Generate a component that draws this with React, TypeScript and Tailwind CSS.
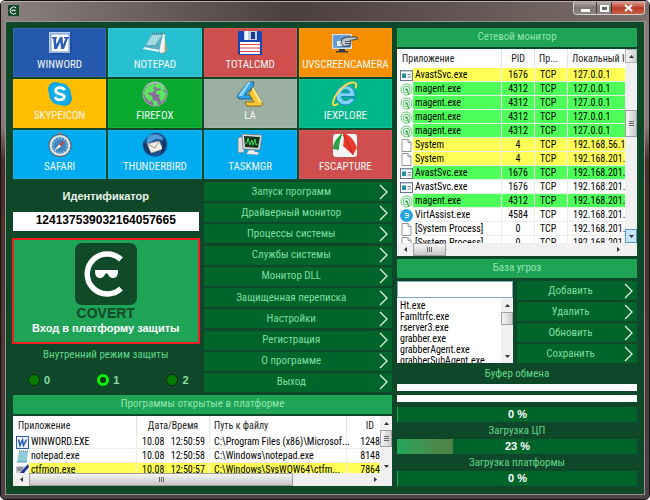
import type { ReactNode } from "react";

const NARROW = "font-['Roboto_Condensed',Roboto,'Liberation_Sans',sans-serif]";
const WIDE = "font-['Liberation_Sans',Arial,sans-serif]";

function WordIcon() {
  return (
    <svg viewBox="0 0 26 26" className="size-[26px]">
      <rect x="2" y="2" width="23" height="23" rx="1" fill="#1f4fa3" />
      <rect x="2" y="2" width="21" height="21" fill="#b9cdf0" />
      <rect x="4" y="4" width="18" height="18" fill="#fff" />
      <rect x="4" y="4" width="18" height="18" fill="none" stroke="#5b7fc4" strokeWidth="0.8" />
      <path d="M5 7h5v1.500H8.900l.6 6L13 7h2.500l.6 7.500L18.500 8.500H17V7h5v1.500h-1.200L17 19h-3l-.7-7-3.300 7H7.200L6.300 8.500H5z" fill="#2d5cb5" />
    </svg>
  );
}

function NotepadIcon() {
  return (
    <svg viewBox="0 0 26 26" className="size-[26px]">
      <path d="M22 4l3 16-4 4-4-2z" fill="#b99b63" />
      <path d="M11 4h12l-.500 18-4 1z" fill="#eef6f7" />
      <path d="M9 4h12l-4 18L1 19z" fill="#58adbf" />
      <path d="M10 5h10l-7 10H4z" fill="#b4e5eb" opacity=".8" />
      <path d="M1 19l16 3 .5-2L2 17z" fill="#e4f6f7" />
      <path d="M10 3.500h13" stroke="#607f86" strokeWidth="2" strokeDasharray="1 1" />
    </svg>
  );
}

function FloppyIcon() {
  return (
    <svg viewBox="0 0 26 26" className="size-[26px]">
      <path d="M1 2l1-1h22l1 1v23H2l-1-2z" fill="#1747b4" />
      <path d="M7 1h13v9H7z" fill="#c5cddd" />
      <path d="M14 2h4v7h-4z" fill="#173a91" />
      <path d="M8 1h3v9H8z" fill="#f3f5fa" />
      <path d="M3 12h20v12H3z" fill="#fff" />
      <path d="M3 14.500h20M3 18h20M3 21.500h20" stroke="#e2454c" strokeWidth="1.200" />
      <path d="M2 22h1v2H2zM23 22h1v2h-1z" fill="#0d2a70" />
    </svg>
  );
}

function CameraIcon() {
  return (
    <svg viewBox="0 0 26 26" className="size-[26px]">
      <path d="M0 4h20v15H0z" fill="#d5dde6" />
      <path d="M1.500 5.500h17v12h-17z" fill="#3c78bb" />
      <path d="M1.500 5.500h17L8 17.500H1.500z" fill="#5f9ad6" />
      <path d="M7 19h6v2h3v1.500H4V21h3z" fill="#333b45" />
      <path d="M5 11h5v5H5z" fill="#e8edf2" />
      <path d="M10 9l5-2h10l1 2-8 1.500 1 2-1 3-6 1-3-3z" fill="#bcc4cb" stroke="#30363d" strokeWidth=".9" />
      <path d="M13 11.500h5M13 13.500h5" stroke="#30363d" strokeWidth=".8" />
    </svg>
  );
}

function SkypeIcon() {
  return (
    <svg viewBox="0 0 26 26" className="size-[26px]">
      <circle cx="8.500" cy="8.500" r="7.500" fill="#0ba4e0" />
      <circle cx="17.500" cy="17.500" r="7.500" fill="#0ba4e0" />
      <circle cx="13" cy="13" r="11" fill="#12aeea" />
      <path d="M17.500 9.300C16.800 7.400 15 6.700 13 6.700c-2.500 0-4.300 1.200-4.300 3.100 0 4.500 8.500 2 8.500 5.800 0 2-1.900 3.200-4.300 3.200-2.500 0-4.200-1-4.800-3" fill="none" stroke="#fff" strokeWidth="2.800" />
    </svg>
  );
}

function FirefoxIcon() {
  return (
    <svg viewBox="0 0 26 26" className="size-[26px]">
      <circle cx="13" cy="13" r="12.500" fill="#a3b0aa" />
      <circle cx="13" cy="13" r="11.500" fill="#8a6f9d" />
      <path d="M3 8l4-4 5-2 1 3-2 2 2 2-3 3-3-1-1 2 4 2 1 3-3 3-4-4-2-5zM14 2l6 2 4 5-4 1-2-3-3 1-2-3zM14 10l5-1 5 3-1 5-4 4-2-5 1-2-4-1zM10 19l5 1 1 4-4 1z" fill="#5be660" />
      <path d="M4 6a11.500 11.500 0 0118 0" fill="none" stroke="#e2e9e4" strokeWidth=".8" opacity=".7" />
    </svg>
  );
}

function LaIcon() {
  return (
    <svg viewBox="0 0 26 26" className="size-[26px]">
      <path d="M11 1h6l-1 5-8 8h5l2 4H2L0 15z" fill="#2ea3e6" stroke="#12507f" strokeWidth=".8" />
      <path d="M11 1h3L5 15H1z" fill="#8ed6f8" />
      <path d="M16 6l10 17-2 2H10l-2-4h9l-5-8z" fill="#f9c632" stroke="#7b5a12" strokeWidth=".8" />
      <path d="M15 8l7 13h3L16 6z" fill="#fde98c" />
    </svg>
  );
}

function ExplorerIcon() {
  return (
    <svg viewBox="0 0 26 26" className="size-[26px]">
      <path d="M23 15.500H9.500c.4 2.700 2 4 4.200 4 1.800 0 3-.7 3.700-2.200h5.200c-1.200 4-4.700 6.700-9.100 6.700-5.500 0-9.500-4-9.500-9.500S8 4.600 13.500 4.600c5.800 0 10 4.400 9.500 10.900zM9.500 11.800h8c-.3-2.100-1.800-3.200-3.900-3.200s-3.600 1.100-4.100 3.200z" fill="#7dd2f8" stroke="#1c7fc0" strokeWidth=".9" />
      <path d="M6 22.500c-3 2.500-5.500 2.300-5-1C2 14 12 2.500 20 1.500c4-.5 5 2 3.500 6" fill="none" stroke="#f8d749" strokeWidth="2" />
    </svg>
  );
}

function SafariIcon() {
  return (
    <svg viewBox="0 0 26 26" className="size-[26px]">
      <rect x="11" y="0" width="4" height="3" rx="1" fill="#7c8790" />
      <circle cx="13" cy="13.500" r="11.500" fill="#59636b" />
      <circle cx="13" cy="13.500" r="10.500" fill="#dde2e5" />
      <circle cx="13" cy="13.500" r="8.200" fill="#3d84bd" />
      <circle cx="13" cy="13.500" r="6.800" fill="none" stroke="#b9dcf2" strokeWidth="1.500" strokeDasharray="1 2" />
      <path d="M19 8l-5 6.500-2-2z" fill="#e0432f" />
      <path d="M7 19l5-6.500 2 2z" fill="#f4f7f9" />
    </svg>
  );
}

function ThunderbirdIcon() {
  return (
    <svg viewBox="0 0 26 26" className="size-[26px]">
      <path d="M9 2c6-3 13 0 15.500 6 2.500 7-1 14-7.500 16C9 26 2 22 1 15 0 9 4 6 9 2z" fill="#1d4f8f" />
      <path d="M8 3c6-2 12 0 14 5l-8-1-9 5C4 8 5 5 8 3z" fill="#4d9bd6" />
      <path d="M5 12l12-3 4 8-12 4z" fill="#f2efe9" stroke="#a39d90" strokeWidth=".6" />
      <path d="M5 12l8 4 4-7" fill="none" stroke="#958c7a" strokeWidth=".9" />
      <path d="M1 10l4 2 4 10c-5-1-8-6-8-12z" fill="#173b6e" />
      <path d="M21 6c4 5 3 13-3 17 2-5 3-11 3-17z" fill="#123163" />
    </svg>
  );
}

function TaskManagerIcon() {
  return (
    <svg viewBox="0 0 26 26" className="size-[26px]">
      <path d="M1 6l6-2v16l-5 1-1-2z" fill="#dcdfe0" stroke="#777e80" strokeWidth=".7" />
      <path d="M5 2l20 1-2 15-17-1z" fill="#d6dadb" stroke="#6c7376" strokeWidth=".7" />
      <path d="M7 4l16 1-2 11-13-1z" fill="#15351e" />
      <path d="M8 12l2-1 1-5 2 7 2-5 1 5 2-6 1 6 2-1" fill="none" stroke="#3fd655" strokeWidth="1" />
      <path d="M12 18h5l1 2h4l-1 3-12-1z" fill="#eceeee" stroke="#868c8e" strokeWidth=".5" />
    </svg>
  );
}

function CaptureIcon() {
  return (
    <svg viewBox="0 0 26 26" className="size-[26px]">
      <rect x="1" y="2" width="24" height="23" rx="3" fill="#f3f4f3" />
      <path d="M11 1C5 5 1 11 1 17l6 1c0-6 1-11 4-17z" fill="#27a343" />
      <path d="M11 1c8 2 12 9 14 15l-4 7-10-9c1-5 1-9 0-13z" fill="#e83a2c" />
      <path d="M11 3c4 5 7 12 10 20" fill="none" stroke="#a81f18" strokeWidth=".8" />
    </svg>
  );
}

function CovertMark({ className }: { className: string }) {
  return (
    <svg viewBox="0 0 62 62" className={className} aria-hidden="true">
      <rect width="62" height="62" rx="7" fill="#104a29" />
      <path d="M46 16.500A20 20 0 1 0 46 45.500" fill="none" stroke="#fff" strokeWidth="5.500" />
      <path d="M20 27h23v1c0 5-2 7-5 7-3.300 0-4.600-2.500-5.400-4.500h-2.200C29.600 32.500 28.300 35 25 35c-3 0-5-2-5-7z" fill="#fff" />
    </svg>
  );
}

const tiles: { name: string; color: string; icon: ReactNode }[] = [
  { name: "WINWORD", color: "bg-[#2459ad]", icon: <WordIcon /> },
  { name: "NOTEPAD", color: "bg-[#27bfd2]", icon: <NotepadIcon /> },
  { name: "TOTALCMD", color: "bg-[#cf4e4e]", icon: <FloppyIcon /> },
  { name: "UVSCREENCAMERA", color: "bg-[#f68f00]", icon: <CameraIcon /> },
  { name: "SKYPEICON", color: "bg-[#ffbd00]", icon: <SkypeIcon /> },
  { name: "FIREFOX", color: "bg-[#09a82e]", icon: <FirefoxIcon /> },
  { name: "LA", color: "bg-[#9bb0a2]", icon: <LaIcon /> },
  { name: "IEXPLORE", color: "bg-[#00b78a]", icon: <ExplorerIcon /> },
  { name: "SAFARI", color: "bg-[#00acef]", icon: <SafariIcon /> },
  { name: "THUNDERBIRD", color: "bg-[#00acef]", icon: <ThunderbirdIcon /> },
  { name: "TASKMGR", color: "bg-[#00acef]", icon: <TaskManagerIcon /> },
  { name: "FSCAPTURE", color: "bg-[#cf4e4e]", icon: <CaptureIcon /> },
];

const menu = [
  "Запуск программ",
  "Драйверный монитор",
  "Процессы системы",
  "Службы системы",
  "Монитор DLL",
  "Защищенная переписка",
  "Настройки",
  "Регистрация",
  "О программе",
  "Выход",
];

type RowIcon = "app" | "agent" | "file" | "assist" | "word" | "note" | "pen";
type Tone = "yellow" | "green" | "plain";

const toneClass: Record<Tone, string> = {
  yellow: "bg-[#ffff55]",
  green: "bg-[#4dff58]",
  plain: "bg-white",
};

const connections: [RowIcon, string, string, string, Tone][] = [
  ["app", "AvastSvc.exe", "1676", "127.0.0.1", "yellow"],
  ["agent", "magent.exe", "4312", "127.0.0.1", "green"],
  ["agent", "magent.exe", "4312", "127.0.0.1", "green"],
  ["agent", "magent.exe", "4312", "127.0.0.1", "green"],
  ["agent", "magent.exe", "4312", "127.0.0.1", "green"],
  ["file", "System", "4", "192.168.56.1", "yellow"],
  ["file", "System", "4", "192.168.201.", "yellow"],
  ["app", "AvastSvc.exe", "1676", "192.168.201.", "green"],
  ["app", "AvastSvc.exe", "1676", "192.168.201.", "plain"],
  ["agent", "magent.exe", "4312", "192.168.201.", "green"],
  ["assist", "VirtAssist.exe", "4584", "192.168.201.", "plain"],
  ["file", "[System Process]", "0", "192.168.201.", "plain"],
  ["file", "[System Process]", "0", "192.168.201.", "plain"],
];

const programs: [RowIcon, string, string, string, string, Tone][] = [
  ["word", "WINWORD.EXE", "12:50:59", "C:\\Program Files (x86)\\Microsof...", "1248", "plain"],
  ["note", "notepad.exe", "12:50:58", "C:\\Windows\\notepad.exe", "8148", "plain"],
  ["pen", "ctfmon.exe", "12:50:57", "C:\\Windows\\SysWOW64\\ctfm...", "7864", "yellow"],
];

const threats = ["Ht.exe", "Famltrfc.exe", "rserver3.exe", "grabber.exe", "grabberAgent.exe", "grabberSubAgent.exe"];

function SmallIcon({ kind }: { kind: RowIcon }) {
  return (
    <svg viewBox="0 0 13 13" className="mx-auto block size-[13px]" aria-hidden="true">
      {kind === "app" && (
        <>
          <rect x=".5" y="1.500" width="12" height="10" fill="#f1f6f8" stroke="#6c7885" />
          <path d="M1 2h11" stroke="#8ea6bd" />
          <path d="M2 4.500h4v4.500H2z" fill="#2b8f9b" />
          <path d="M7.500 5.500h3.500M7.500 8h3.500" stroke="#7d8a95" />
        </>
      )}
      {kind === "agent" && (
        <>
          <circle cx="6.500" cy="6.500" r="5.500" fill="#fff" stroke="#3fbf55" strokeWidth=".9" />
          <circle cx="6.500" cy="6.500" r="3.300" fill="none" stroke="#3fbf55" strokeWidth=".9" />
          <circle cx="6.500" cy="6.500" r="1.300" fill="#2fae49" />
          <path d="M7 7l2 5" stroke="#2fae49" />
        </>
      )}
      {kind === "file" && <path d="M2 .5h6l3 3v9H2zM8 .5v3h3" fill="#fff" stroke="#8a8a8a" strokeWidth=".9" />}
      {kind === "assist" && (
        <>
          <circle cx="6.500" cy="6.500" r="6.500" fill="#2aa5e0" />
          <path d="M5 4.500h2.500a1 1 0 011 1v2a1 1 0 01-1 1H5M5.500 6.500h3" fill="none" stroke="#fff" />
        </>
      )}
      {kind === "word" && (
        <>
          <rect x=".5" y=".5" width="12" height="12" fill="#eaf1fc" stroke="#2a57b0" />
          <path d="M2.500 3.500l1.500 6 2.500-5.500 1 5.500 3-6" fill="none" stroke="#2a57b0" strokeWidth="1.500" />
        </>
      )}
      {kind === "note" && (
        <>
          <path d="M3 1h9l-1 11H1z" fill="#8fcbd6" />
          <path d="M3 1h9" stroke="#5c7f88" strokeDasharray="1 1" />
          <path d="M1 12h10" stroke="#4f9aa8" />
        </>
      )}
      {kind === "pen" && (
        <>
          <path d="M0 2h9v10H0z" fill="#c9ccd2" />
          <path d="M1 4h6M1 6h5" stroke="#555b66" />
          <path d="M12 0L4 9l-1 3 4-2 6-7z" fill="#1a2f9c" />
        </>
      )}
    </svg>
  );
}

function Arrow({ dir }: { dir: "up" | "down" | "left" | "right" }) {
  const d = { up: "M1 5l2.500-3L6 5z", down: "M1 2l2.500 3L6 2z", left: "M5 1L2 3.500 5 6z", right: "M2 1l3 2.500L2 6z" }[dir];
  return (
    <svg viewBox="0 0 7 7" className="size-[7px]" aria-hidden="true">
      <path d={d} fill="#333" />
    </svg>
  );
}

function Chevron() {
  return (
    <svg viewBox="0 0 9 16" className="h-4 w-[9px] shrink-0" aria-hidden="true">
      <path d="M1 1l7 7-7 7" fill="none" stroke="#e2f3e6" strokeWidth="1.300" />
    </svg>
  );
}

function ActionButton({ label }: { label: string }) {
  return (
    <button type="button" className="flex h-[19px] w-full items-center bg-[#00652b] pr-1 text-[11px] leading-[14px] text-[#7fdf9f]">
      <span className="flex-1 text-center">{label}</span>
      <Chevron />
    </button>
  );
}

function PanelTitle({ children }: { children: ReactNode }) {
  return <h2 className="flex h-[19px] items-center justify-center bg-[#1fa357] text-[11px] text-[#8fe6ab]">{children}</h2>;
}

function ScrollX({ thumb, end }: { thumb: string; end: string }) {
  return (
    <div className="flex h-[13px] shrink-0 items-center bg-[#f0f0f0]">
      <button type="button" aria-label="Влево" className="flex h-full w-4 items-center justify-center">
        <Arrow dir="left" />
      </button>
      <div className="flex h-full flex-1">
        <div className={`flex h-full items-center justify-center gap-px border border-[#a0a0a0] bg-linear-to-b from-[#f6f6f6] to-[#c6c6c6] ${thumb}`}>
          <i className="h-[5px] w-px bg-[#666]" />
          <i className="h-[5px] w-px bg-[#666]" />
          <i className="h-[5px] w-px bg-[#666]" />
        </div>
      </div>
      <button type="button" aria-label="Вправо" className={`flex h-full items-center pl-1 ${end}`}>
        <Arrow dir="right" />
      </button>
    </div>
  );
}

function ScrollY({ thumb, grip = true, framed = false }: { thumb: string; grip?: boolean; framed?: boolean }) {
  const edge = framed ? "border border-[#b4b4b4] bg-linear-to-r from-[#f4f4f4] to-[#d2d2d2]" : "";
  const lower = framed ? "border border-[#5a9cc4] bg-[#c5e6f6]" : "";
  return (
    <div className="flex w-3 shrink-0 flex-col bg-[#f0f0f0]">
      <button type="button" aria-label="Вверх" className={`flex h-[14px] items-center justify-center ${edge}`}>
        <Arrow dir="up" />
      </button>
      <div className="flex-1">
        <div className={`flex flex-col items-center justify-center gap-px border border-[#a0a0a0] bg-linear-to-r from-[#f6f6f6] to-[#cccccc] ${thumb}`}>
          {grip && (
            <>
              <i className="h-px w-[5px] bg-[#666]" />
              <i className="h-px w-[5px] bg-[#666]" />
              <i className="h-px w-[5px] bg-[#666]" />
            </>
          )}
        </div>
      </div>
      <button type="button" aria-label="Вниз" className={`flex h-[14px] items-center justify-center ${lower}`}>
        <Arrow dir="down" />
      </button>
    </div>
  );
}

function Meter({ value, label }: { value: number; label: string }) {
  return (
    <div
      role="progressbar"
      aria-label={label}
      aria-valuenow={value}
      className="relative flex h-[15px] items-center justify-center border-l border-[#1fa357] bg-[#00652b]"
    >
      <div className="absolute inset-y-0 left-0 bg-linear-to-r from-[#1fa65a] to-[#517f45]" style={{ width: `${value}%` }} />
      <span className={`relative text-[11px] font-bold text-white ${WIDE}`}>{value} %</span>
    </div>
  );
}

const headCell = "overflow-hidden border-r border-[#dfe3e8] p-0 font-normal whitespace-nowrap text-[#222]";
const bodyCell = "border-r border-b border-[#e9efe6] p-0 whitespace-nowrap";

export default function App() {
  return (
    <div
      className={`flex min-h-screen w-full flex-col rounded-[5px] border border-[#15100f] bg-linear-to-b from-[#877c79] from-25% via-[#4a2f24] via-32% to-[#4d4244] px-1 pb-1 text-[11px] ${NARROW}`}
    >
      <header className="-mx-1 flex h-[20px] justify-between rounded-t-[4px] border-t border-[#b9b0ae] bg-linear-to-r from-[#8b8280] via-[#4c3f3f] via-45% to-[#7d706b] pr-1 pl-[7px]">
        <CovertMark className="mt-[3px] size-[11px]" />
        <div className="flex h-[13px] overflow-hidden rounded-b-[4px] border border-t-0 border-[#d3cdcb]">
          <button type="button" aria-label="Свернуть" className="flex w-[23px] items-center justify-center border-r border-[#443b3b] bg-linear-to-b from-[#b3adac] via-[#7d7473] to-[#8f8887]">
            <i className="mt-1 h-[3px] w-[9px] bg-white" />
          </button>
          <button type="button" aria-label="Развернуть" className="flex w-[15px] items-center justify-center border-r border-[#443b3b] bg-linear-to-b from-[#b3adac] via-[#7d7473] to-[#8f8887]">
            <i className="h-[7px] w-[9px] border-2 border-white bg-[#666]" />
          </button>
          <button type="button" aria-label="Закрыть" className="flex w-[32px] items-center justify-center bg-linear-to-b from-[#df988a] via-[#b93b26] to-[#c9604b]">
            <svg viewBox="0 0 9 8" className="h-2 w-[9px]" aria-hidden="true">
              <path d="M1 1l7 6M8 1L1 7" stroke="#fff" strokeWidth="2.200" />
            </svg>
          </button>
        </div>
      </header>

      <main className="grid flex-1 grid-cols-[minmax(0,379fr)_minmax(0,240fr)] items-start gap-x-[5px] border border-[#9b9391] bg-[#0f4828] px-[7px] pt-[6px] pb-2">
        <div className="flex flex-col gap-[3px]">
          <div className="grid grid-cols-4 gap-[2px]">
            {tiles.map((t) => (
              <button key={t.name} type="button" className={`flex h-[49px] flex-col items-center pt-[2px] text-[#f3f7f5] shadow-[inset_0_0_0_1px_rgba(255,255,255,0.08)] ${t.color}`}>
                {t.icon}
                <span className="mt-[2px] text-[11px] leading-[14px]">{t.name}</span>
              </button>
            ))}
          </div>

          <div className="grid grid-cols-2 gap-x-[2px]">
            <section className="flex flex-col pr-[3px]">
              <label htmlFor="ident" className={`pt-[7px] text-center text-[11px] leading-[14px] font-bold text-[#eaf5ee] ${WIDE}`}>
                Идентификатор
              </label>
              <input
                id="ident"
                readOnly
                value="124137539032164057665"
                className={`mt-[9px] h-[19px] bg-white pb-1 text-center text-[12px] font-bold text-black ${WIDE}`}
              />
              <button type="button" className="-mx-px mt-[7px] flex h-[106px] flex-col items-center border-2 border-[#ed1c24] bg-[#1fa357] pt-[3px]">
                <CovertMark className="size-[62px]" />
                <span className={`text-[14px] leading-4 font-bold text-[#104a29] ${WIDE}`}>COVERT</span>
                <span className={`text-[11px] leading-[14px] font-bold text-white ${WIDE}`}>Вход в платформу защиты</span>
              </button>
              <fieldset>
                <legend className="w-full pt-1 text-center leading-[14px] text-[#5fd78a]">Внутренний режим защиты</legend>
                <div className="mt-[11px] flex justify-between pr-[10px] pl-[15px]">
                  {["0", "1", "2"].map((v) => (
                    <label key={v} className={`flex h-[14px] items-center gap-1 text-[11px] font-bold text-[#86dca4] ${WIDE}`}>
                      <input
                        type="radio"
                        name="mode"
                        value={v}
                        defaultChecked={v === "1"}
                        className="size-3 appearance-none rounded-full border border-[#042d10] bg-[#027d02] checked:border-[3px] checked:border-[#0ef00e] checked:bg-[#0a3a14]"
                      />
                      {v}
                    </label>
                  ))}
                </div>
              </fieldset>
            </section>
            <nav className="flex min-h-[210px] flex-col justify-between">
              {menu.map((m) => (
                <ActionButton key={m} label={m} />
              ))}
            </nav>
          </div>

          <section>
            <PanelTitle>Программы открытые в платформе</PanelTitle>
            <div className="mt-[2px] bg-white">
              <div className="flex h-[57px]">
                <div className="min-w-0 flex-1 overflow-hidden">
                  <table className="w-full table-fixed border-separate border-spacing-0 text-[10px] leading-[13px] text-black">
                    <colgroup>
                      <col className="w-[16px]" />
                      <col />
                      <col className="w-[29px]" />
                      <col className="w-[44px]" />
                      <col className="w-[137px]" />
                      <col className="w-[33px]" />
                    </colgroup>
                    <thead>
                      <tr className="h-[19px]">
                        <th colSpan={2} className={`${headCell} pl-[5px] text-left`}>Приложение</th>
                        <th colSpan={2} className={`${headCell} text-center`}>Дата/Время</th>
                        <th className={`${headCell} pl-1 text-left`}>Путь к файлу</th>
                        <th className={`${headCell} border-r-0 pr-[6px] text-right`}>ID</th>
                      </tr>
                    </thead>
                    <tbody>
                      {programs.map(([icon, name, time, path, id, tone]) => (
                        <tr key={id} className={`h-[14px] ${toneClass[tone]}`}>
                          <td className="bg-white p-0 pl-[3px]"><SmallIcon kind={icon} /></td>
                          <td className={`${bodyCell} pl-[2px]`}>{name}</td>
                          <td className={`${bodyCell} border-r-0 pl-[5px]`}>10.08</td>
                          <td className={`${bodyCell} pr-1 text-right`}>{time}</td>
                          <td className={`${bodyCell} pl-1`}>{path}</td>
                          <td className={`${bodyCell} border-r-0 text-right`}>{id}</td>
                        </tr>
                      ))}
                    </tbody>
                  </table>
                </div>
                <ScrollY thumb="h-[17px]" />
              </div>
              <ScrollX thumb="w-[78%]" end="w-[24px]" />
            </div>
          </section>
        </div>

        <div className="flex flex-col">
          <PanelTitle>Сетевой монитор</PanelTitle>
          <div className="mt-[2px] bg-white">
            <div className="flex h-[194px]">
              <div className="min-w-0 flex-1 overflow-hidden">
                <table className="w-full table-fixed border-separate border-spacing-0 text-[10px] leading-[13px] text-black">
                  <colgroup>
                    <col className="w-[16px]" />
                    <col />
                    <col className="w-[33px]" />
                    <col className="w-[33px]" />
                    <col className="w-[57px]" />
                  </colgroup>
                  <thead>
                    <tr className="h-[19px]">
                      <th colSpan={2} className={`${headCell} pl-[5px] text-left`}>Приложение</th>
                      <th className={`${headCell} text-center`}>PID</th>
                      <th className={`${headCell} pl-1 text-left`}>Пр...</th>
                      <th className={`${headCell} border-r-0 pl-1 text-left`}>Локальный IP</th>
                    </tr>
                  </thead>
                  <tbody>
                    {connections.map(([icon, name, pid, ip, tone], i) => (
                      <tr key={i} className={`h-[14px] ${toneClass[tone]}`}>
                        <td className="bg-white p-0 pl-[3px]"><SmallIcon kind={icon} /></td>
                        <td className={`${bodyCell} pl-[2px]`}>{name}</td>
                        <td className={`${bodyCell} text-center`}>{pid}</td>
                        <td className={`${bodyCell} pl-[5px]`}>TCP</td>
                        <td className={`${bodyCell} border-r-0 pl-[5px]`}>{ip}</td>
                      </tr>
                    ))}
                  </tbody>
                </table>
              </div>
              <ScrollY thumb="mt-[47px] h-[27px]" framed />
            </div>
            <ScrollX thumb="w-[33px]" end="w-[26px]" />
          </div>

          <div className="mt-[3px]">
            <PanelTitle>База угроз</PanelTitle>
          </div>
          <div className="mt-[3px] flex gap-1">
            <div className="flex flex-1 flex-col bg-white">
              <input aria-label="Новая угроза" className="h-[17px] w-full border border-[#7fa9c4] bg-white px-1 text-[10px]" />
              <div className="flex h-[65px]">
                <ul className="min-w-0 flex-1 overflow-hidden pt-[2px] pl-[3px] text-[10px] leading-[11px] text-black">
                  {threats.map((t) => (
                    <li key={t}>{t}</li>
                  ))}
                </ul>
                <ScrollY thumb="h-[13px]" grip={false} />
              </div>
            </div>
            <div className="flex w-1/2 flex-col gap-[2px]">
              {["Добавить", "Удалить", "Обновить", "Сохранить"].map((b) => (
                <ActionButton key={b} label={b} />
              ))}
            </div>
          </div>

          <label htmlFor="clip" className="mt-[3px] text-center leading-[16px] text-[#5fd78a]">Буфер обмена</label>
          <input id="clip" readOnly className="mt-[2px] h-[7px] bg-white" />
          <input aria-label="Буфер обмена, вторая строка" readOnly className="mt-1 mb-[5px] h-[7px] bg-white" />
          <Meter value={0} label="Буфер обмена" />
          <p className="py-px text-center leading-[15px] text-[#5fd78a]">Загрузка ЦП</p>
          <Meter value={23} label="Загрузка ЦП" />
          <p className="py-px text-center leading-[15px] text-[#5fd78a]">Загрузка платформы</p>
          <Meter value={0} label="Загрузка платформы" />
        </div>
      </main>
    </div>
  );
}
